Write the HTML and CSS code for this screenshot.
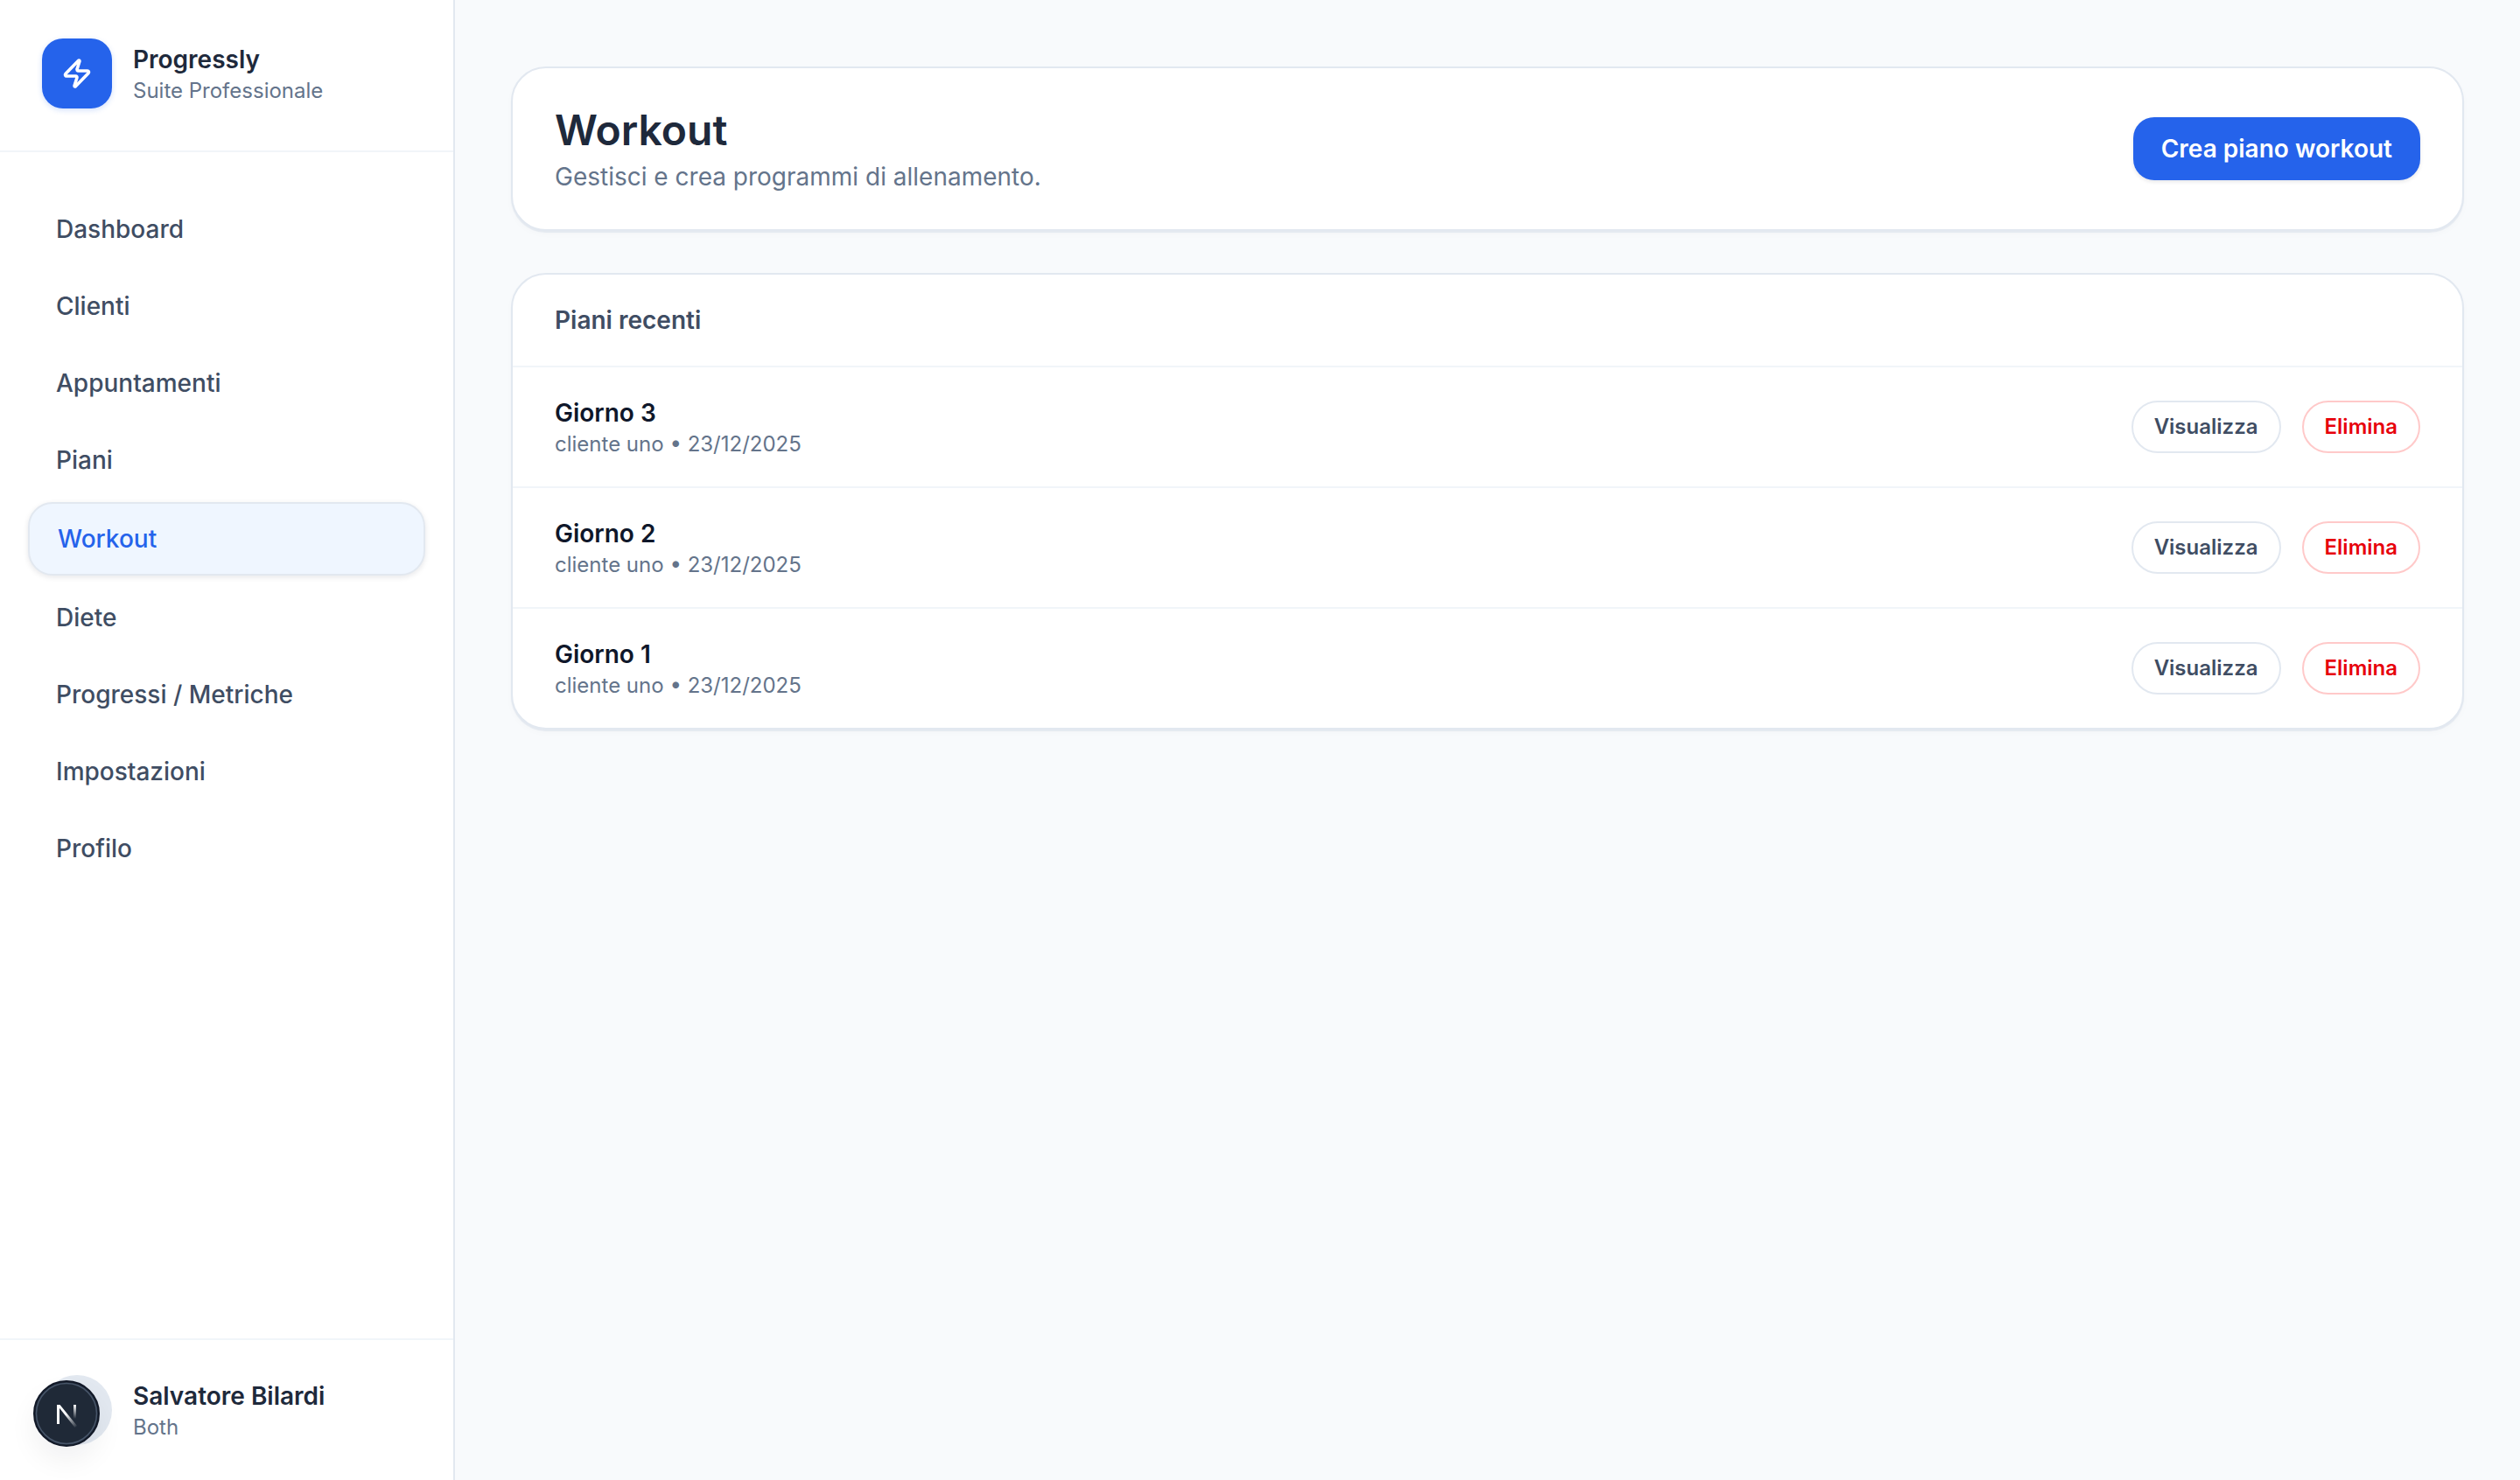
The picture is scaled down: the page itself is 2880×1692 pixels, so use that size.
FILE: index.html
```html
<!DOCTYPE html>
<html lang="it">
<head>
<meta charset="utf-8">
<title>Progressly - Workout</title>
<link rel="stylesheet" href="styles.css">
</head>
<body>
<div class="app">
  <aside class="sidebar">
    <div class="brand">
      <div class="brand-logo">
        <svg class="zap" viewBox="0 0 24 24" fill="none" stroke="#fff" stroke-width="2.4" stroke-linecap="round" stroke-linejoin="round"><path d="M4 14a1 1 0 0 1-.78-1.63l9.9-10.2a.5.5 0 0 1 .86.46l-1.92 6.02A1 1 0 0 0 13 10h7a1 1 0 0 1 .78 1.63l-9.9 10.2a.5.5 0 0 1-.86-.46l1.92-6.02A1 1 0 0 0 11 14z"/></svg>
      </div>
      <div class="stack">
        <div class="who">Progressly</div>
        <div class="sub">Suite Professionale</div>
      </div>
    </div>
    <nav class="nav">
      <a class="nav-item">Dashboard</a>
      <a class="nav-item">Clienti</a>
      <a class="nav-item">Appuntamenti</a>
      <a class="nav-item">Piani</a>
      <a class="nav-item active">Workout</a>
      <a class="nav-item">Diete</a>
      <a class="nav-item">Progressi / Metriche</a>
      <a class="nav-item">Impostazioni</a>
      <a class="nav-item">Profilo</a>
    </nav>
    <div class="user">
      <div class="avatar"></div>
      <div class="stack">
        <div class="who">Salvatore Bilardi</div>
        <div class="sub">Both</div>
      </div>
    </div>
  </aside>
  <main class="main">
    <section class="card head-card">
      <div>
        <h1 class="title">Workout</h1>
        <p class="subtitle">Gestisci e crea programmi di allenamento.</p>
      </div>
      <button class="primary">Crea piano workout</button>
    </section>
    <section class="card list-card">
      <div class="list-head">Piani recenti</div>
      <div class="row">
        <div class="row-text"><div class="row-title">Giorno 3</div><div class="row-meta">cliente uno • 23/12/2025</div></div>
        <div class="actions"><button class="pill">Visualizza</button><button class="pill danger">Elimina</button></div>
      </div>
      <div class="row">
        <div class="row-text"><div class="row-title">Giorno 2</div><div class="row-meta">cliente uno • 23/12/2025</div></div>
        <div class="actions"><button class="pill">Visualizza</button><button class="pill danger">Elimina</button></div>
      </div>
      <div class="row">
        <div class="row-text"><div class="row-title">Giorno 1</div><div class="row-meta">cliente uno • 23/12/2025</div></div>
        <div class="actions"><button class="pill">Visualizza</button><button class="pill danger">Elimina</button></div>
      </div>
    </section>
  </main>
</div>
<div class="dev-badge">
  <svg viewBox="0 0 76 76" width="76" height="76" fill="none">
    <defs>
      <linearGradient id="ndiag" x1="30" y1="30" x2="50" y2="54" gradientUnits="userSpaceOnUse"><stop offset="0.35" stop-color="#fff"/><stop offset="1" stop-color="#fff" stop-opacity="0"/></linearGradient>
      <linearGradient id="nright" x1="47" y1="28" x2="47" y2="44" gradientUnits="userSpaceOnUse"><stop offset="0" stop-color="#fff"/><stop offset="1" stop-color="#fff" stop-opacity="0"/></linearGradient>
    </defs>
    <circle cx="38" cy="38" r="37" fill="#1f2937" stroke="#111827" stroke-width="2"/>
    <circle cx="38" cy="38" r="34.5" stroke="#475569" stroke-width="1.500"/>
    <path d="M27 28h3v22h-3z" fill="#fff"/>
    <path d="M27 28h3.500L50 52l-2.500 2z" fill="url(#ndiag)"/>
    <path d="M46 28h3v18h-3z" fill="url(#nright)"/>
  </svg>
</div>
</body>
</html>
```
FILE: styles.css
```css
* { box-sizing: border-box; }
html, body { margin: 0; height: 100%; }
body {
  font-family: Inter, "Liberation Sans", sans-serif;
  background: #f8fafc;
  color: #1e293b;
}
button { font-family: inherit; cursor: pointer; }
.app { display: flex; height: 1692px; }

.sidebar {
  width: 520px;
  flex: none;
  display: flex;
  flex-direction: column;
  background: #fff;
  border-right: 2px solid #e2e8f0;
}
.brand {
  height: 174px;
  flex: none;
  display: flex;
  align-items: center;
  gap: 24px;
  padding: 0 48px 4px;
  border-bottom: 2px solid #f1f5f9;
}
.brand-logo {
  width: 80px;
  height: 80px;
  border-radius: 24px;
  background: #2563eb;
  display: flex;
  align-items: center;
  justify-content: center;
  box-shadow: 0 2px 6px rgba(37, 99, 235, .2);
}
.zap { width: 36px; height: 36px; }
.stack { display: flex; flex-direction: column; }
.who { font-size: 28px; line-height: 40px; font-weight: 600; color: #1e293b; }
.sub { font-size: 24px; line-height: 32px; color: #64748b; }

.nav {
  flex: 1;
  display: flex;
  flex-direction: column;
  gap: 8px;
  padding: 48px 32px;
}
.nav-item {
  display: block;
  font-size: 28px;
  line-height: 44px;
  font-weight: 500;
  color: #3f4d63;
  padding: 18px 32px;
}
.nav-item.active {
  color: #2563eb;
  background: #eff6ff;
  border: 2px solid #e2e8f0;
  border-radius: 28px;
  box-shadow: 0 2px 6px rgba(15, 23, 42, .1);
}

.user {
  height: 162px;
  flex: none;
  display: flex;
  align-items: center;
  gap: 24px;
  padding: 0 48px;
  border-top: 2px solid #f1f5f9;
}
.avatar {
  width: 80px;
  height: 80px;
  border-radius: 50%;
  background: #e2e8f0;
  flex: none;
}
.dev-badge {
  position: absolute;
  left: 38px;
  top: 1578px;
  width: 76px;
  height: 76px;
  border-radius: 50%;
  box-shadow: 0 16px 32px rgba(15, 23, 42, .06);
}
.dev-badge svg { display: block; }

.main {
  flex: 1;
  display: flex;
  flex-direction: column;
  align-items: stretch;
  gap: 48px;
  padding: 76px 64px;
}
.card {
  background: #fff;
  border: 2px solid #e2e8f0;
  border-radius: 40px;
  box-shadow: 0 2px 1px #e4e9f0, 0 4px 8px rgba(15, 23, 42, .02);
}
.head-card {
  display: flex;
  align-items: center;
  justify-content: space-between;
  height: 188px;
  padding: 0 48px;
}
.title { margin: 0 0 2px; font-size: 48px; line-height: 62px; font-weight: 600; color: #1e293b; }
.subtitle { margin: 0; font-size: 28px; line-height: 40px; color: #64748b; }
.primary {
  height: 72px;
  padding: 0 32px;
  border: 0;
  border-radius: 24px;
  background: #2563eb;
  color: #fff;
  font-size: 28px;
  font-weight: 600;
  box-shadow: 0 2px 4px rgba(15, 23, 42, .1);
}
.list-head {
  height: 104px;
  display: flex;
  align-items: center;
  padding: 0 48px;
  font-size: 28px;
  font-weight: 600;
  color: #3f4d63;
}
.row {
  height: 138px;
  display: flex;
  align-items: center;
  justify-content: space-between;
  padding: 0 48px;
  border-top: 2px solid #f1f5f9;
}
.row-title { font-size: 28px; line-height: 40px; font-weight: 600; color: #0f172a; }
.row-meta { font-size: 24px; line-height: 32px; color: #64748b; }
.actions { display: flex; gap: 24px; }
.pill {
  height: 60px;
  padding: 0 24px 2px;
  background: #fff;
  border: 2px solid #e2e8f0;
  border-radius: 30px;
  font-size: 24px;
  font-weight: 600;
  color: #3f4d63;
}
.pill.danger { color: #e7000b; border-color: #ffc9c9; }
```
